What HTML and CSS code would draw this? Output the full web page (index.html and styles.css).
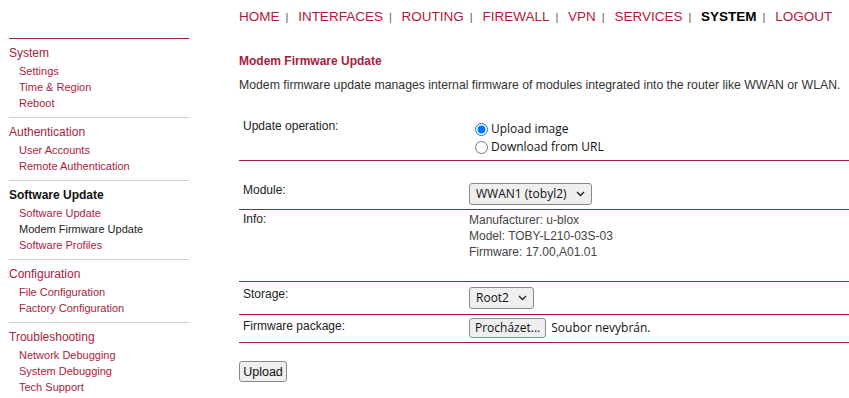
FILE: index.html
```html
<!DOCTYPE html>
<html lang="en">
<head>
    <meta charset="UTF-8">
    <title>Modem Firmware Update</title>
    <link rel="stylesheet" href="styles.css">
</head>
<body>
<div class="page">
    <div class="sidebar">
        <div class="menu">
            <div class="section">
                <div class="heading">System</div>
                <a class="item">Settings</a>
                <a class="item">Time &amp; Region</a>
                <a class="item">Reboot</a>
            </div>
            <div class="section">
                <div class="heading">Authentication</div>
                <a class="item">User Accounts</a>
                <a class="item">Remote Authentication</a>
            </div>
            <div class="section">
                <div class="heading active">Software Update</div>
                <a class="item">Software Update</a>
                <a class="item active">Modem Firmware Update</a>
                <a class="item">Software Profiles</a>
            </div>
            <div class="section">
                <div class="heading">Configuration</div>
                <a class="item">File Configuration</a>
                <a class="item">Factory Configuration</a>
            </div>
            <div class="section last">
                <div class="heading">Troubleshooting</div>
                <a class="item">Network Debugging</a>
                <a class="item">System Debugging</a>
                <a class="item">Tech Support</a>
            </div>
        </div>
    </div>

    <div class="main">
        <div class="nav">
            <a>HOME</a><span class="sep">|</span>
            <a>INTERFACES</a><span class="sep">|</span>
            <a>ROUTING</a><span class="sep">|</span>
            <a>FIREWALL</a><span class="sep">|</span>
            <a>VPN</a><span class="sep">|</span>
            <a>SERVICES</a><span class="sep">|</span>
            <a class="current">SYSTEM</a><span class="sep">|</span>
            <a>LOGOUT</a>
        </div>

        <h1 class="title">Modem Firmware Update</h1>
        <p class="desc">Modem firmware update manages internal firmware of modules integrated into the router like WWAN or WLAN.</p>

        <div class="form">
            <div class="row row-op">
                <div class="label">Update operation:</div>
                <div class="radios">
                    <label class="radio"><input type="radio" name="op" checked>Upload image</label>
                    <label class="radio"><input type="radio" name="op">Download from URL</label>
                </div>
            </div>
            <div class="row row-module">
                <div class="label">Module:</div>
                <div><span class="select">WWAN1 (tobyl2)
                    <svg width="9" height="6" viewBox="0 0 9 6"><path d="M1 1 L4.5 4.5 L8 1" fill="none" stroke="#222" stroke-width="1.4"/></svg>
                </span></div>
            </div>
            <div class="row row-info">
                <div class="label">Info:</div>
                <div class="info">
                    <div>Manufacturer: u-blox</div>
                    <div>Model: TOBY-L210-03S-03</div>
                    <div>Firmware: 17.00,A01.01</div>
                </div>
            </div>
            <div class="row row-storage">
                <div class="label">Storage:</div>
                <div><span class="select">Root2
                    <svg width="9" height="6" viewBox="0 0 9 6"><path d="M1 1 L4.5 4.5 L8 1" fill="none" stroke="#222" stroke-width="1.4"/></svg>
                </span></div>
            </div>
            <div class="row row-file">
                <div class="label">Firmware package:</div>
                <div class="file">
                    <span class="btn file-btn">Procházet...</span>
                    <span class="file-name">Soubor nevybrán.</span>
                </div>
            </div>
        </div>

        <button class="btn upload">Upload</button>
    </div>
</div>
</body>
</html>
```

FILE: styles.css
```css
body {
    margin: 0;
    background: #fff;
    font-family: "Liberation Sans", Arial, sans-serif;
    color: #222;
}

.page {
    display: flex;
    align-items: flex-start;
}

/* left menu */
.sidebar {
    width: 180px;
    margin-left: 9px;
    padding-top: 38px;
    flex-shrink: 0;
}

.menu {
    border-top: 1px solid #a31d3d;
}

.section {
    padding-bottom: 6px;
    border-bottom: 1px solid #cfcfcf;
}

.section.last {
    border-bottom: none;
}

.heading {
    margin-top: 6px;
    margin-bottom: 2px;
    font-size: 12px;
    line-height: 16px;
    color: #a91c3c;
}

.heading.active {
    color: #111;
    font-weight: bold;
}

.item {
    display: block;
    padding-left: 10px;
    font-size: 11px;
    line-height: 16px;
    color: #a91c3c;
}

.item.active {
    color: #222;
}

/* main part */
.main {
    margin-left: 50px;
    flex: 1;
}

.nav {
    padding-top: 9px;
    font-size: 13.5px;
    line-height: 16px;
    white-space: nowrap;
}

.nav a {
    color: #b3183c;
}

.nav a.current {
    color: #000;
    font-weight: bold;
}

.sep {
    display: inline-block;
    font-size: 11px;
    color: #555;
    margin: 0 6px 0 6px;
}

.title {
    margin: 29px 0 0;
    font-size: 12px;
    line-height: 14px;
    color: #a91c3c;
}

.desc {
    margin: 9px 0 0;
    font-size: 12.25px;
    line-height: 16px;
    color: #333;
    white-space: nowrap;
}

.form {
    margin-top: 20px;
}

.row {
    display: grid;
    grid-template-columns: 226px 1fr;
    padding: 0 4px;
    border-bottom: 1px solid #a31d3d;
    font-size: 12px;
    line-height: 14px;
}

.row-op {
    padding-top: 6px;
    padding-bottom: 4px;
}

.radios {
    padding-top: 1px;
}

.radio {
    display: flex;
    align-items: center;
    height: 18px;
    font-family: "Open Sans", sans-serif;
    font-size: 12px;
    color: #111;
}

.radio input {
    width: 13px;
    height: 13px;
    margin: 0 3px 0 6px;
}

.row-module {
    padding-top: 22px;
    padding-bottom: 4px;
}

.row-info {
    padding-top: 2px;
    padding-bottom: 21px;
}

.info {
    line-height: 16px;
    color: #444;
}

.row-storage {
    padding-top: 5px;
    padding-bottom: 5px;
}

.row-file {
    padding-top: 3px;
    padding-bottom: 4px;
}

.row-file .label {
    margin-top: 1px;
}

.select {
    display: inline-flex;
    align-items: center;
    gap: 9px;
    height: 20px;
    padding: 0 6px 0 6px;
    border: 1px solid #8a8a8a;
    border-radius: 3px;
    background: #efefef;
    font-family: "Open Sans", sans-serif;
    font-size: 12px;
    color: #111;
}

.btn {
    display: inline-flex;
    align-items: center;
    box-sizing: border-box;
    border: 1px solid #8a8a8a;
    border-radius: 3px;
    background: #efefef;
    color: #111;
}

.file {
    display: flex;
    align-items: center;
    font-family: "Open Sans", sans-serif;
    font-size: 12px;
}

.file-btn {
    height: 20px;
    padding: 0 5px;
}

.file-name {
    margin-left: 5px;
    color: #111;
}

.upload {
    margin-top: 18px;
    height: 21px;
    width: 48px;
    justify-content: center;
    padding: 0;
    font-family: "Liberation Sans", Arial, sans-serif;
    font-size: 12.5px;
}
```
